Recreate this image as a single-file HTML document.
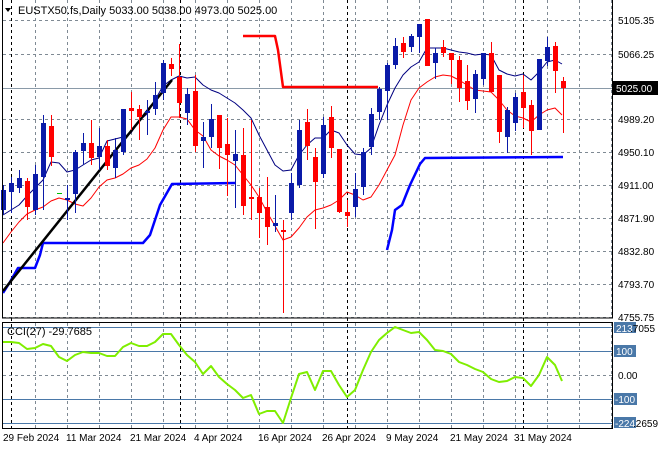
<!DOCTYPE html>
<html><head><meta charset="utf-8"><style>
html,body{margin:0;padding:0;background:#fff;width:660px;height:450px;overflow:hidden}
svg{display:block;font-family:"Liberation Sans",sans-serif;font-size:10px}
</style></head><body>
<svg id="s" width="660" height="450" viewBox="0 0 660 450" xmlns="http://www.w3.org/2000/svg">
<g id="grid" stroke="#7f8a94" stroke-width="1" stroke-dasharray="3,3" fill="none"></g>
<g id="sep" stroke="#000" stroke-width="1" stroke-dasharray="3,3"></g>
<line x1="2" y1="88.5" x2="612" y2="88.5" stroke="#8a9aa8" stroke-width="1"/>
<g id="cci" stroke="#4a78a8" stroke-width="1"></g>
<g id="lines"></g>
<g id="candles"></g>
<rect x="2.5" y="-1" width="610" height="319" fill="none" stroke="#000"/>
<rect x="2.5" y="322.5" width="610" height="106" fill="none" stroke="#000"/>
<polygon points="5,8 11,8 8,12" fill="#000"/>
<text x="18" y="14" font-size="11">EUSTX50.fs,Daily  5033.00 5038.00 4973.00 5025.00</text>
<text x="7" y="335" font-size="11">CCI(27) -29.7685</text>
<g font-size="10" fill="#000">
<text x="618" y="24">5105.35</text>
<text x="618" y="58">5066.25</text>
<text x="618" y="123">4989.20</text>
<text x="618" y="156">4950.10</text>
<text x="618" y="189">4911.00</text>
<text x="618" y="222">4871.90</text>
<text x="618" y="255">4832.80</text>
<text x="618" y="288">4793.70</text>
<text x="618" y="321">4755.75</text>
<rect x="613" y="81" width="45" height="14" fill="#000"/>
<text x="616" y="92" fill="#fff">5025.00</text>
<rect x="614" y="322" width="22" height="11" fill="#4a78a8"/>
<text x="616" y="332" fill="#fff">213</text><text x="630" y="332">.7055</text>
<rect x="614" y="345" width="22" height="12" fill="#4a78a8"/>
<text x="616" y="355" fill="#fff">100</text>
<text x="618" y="379">0.00</text>
<rect x="614" y="393" width="23" height="12" fill="#4a78a8"/>
<text x="615" y="403" fill="#fff">-100</text>
<rect x="614" y="417" width="22" height="11" fill="#4a78a8"/>
<text x="615" y="427" fill="#fff">-224</text><text x="633" y="427">.2659</text>
<text x="3" y="441">29 Feb 2024</text>
<text x="66" y="441">11 Mar 2024</text>
<text x="130" y="441">21 Mar 2024</text>
<text x="194" y="441">4 Apr 2024</text>
<text x="258" y="441">16 Apr 2024</text>
<text x="322" y="441">26 Apr 2024</text>
<text x="386" y="441">9 May 2024</text>
<text x="450" y="441">21 May 2024</text>
<text x="514" y="441">31 May 2024</text>
</g>
</svg>
<script>
var NS="http://www.w3.org/2000/svg";
function el(p,t,a){var e=document.createElementNS(NS,t);for(var k in a)e.setAttribute(k,a[k]);document.getElementById(p).appendChild(e);return e;}
var hy=[20.5,54.5,87.5,119.5,152.5,185.5,218.5,251.5,284.5,317.5];
hy.forEach(function(y){if(y!=87.5)el("grid","line",{x1:3,y1:y,x2:612,y2:y});});
el("grid","line",{x1:3,y1:375.5,x2:612,y2:375.5});
for(var x=35.5;x<612;x+=32){el("grid","line",{x1:x,y1:0,x2:x,y2:317});el("grid","line",{x1:x,y1:323,x2:x,y2:428});}
[11.5,180.5,347.5,523.5].forEach(function(x){el("sep","line",{x1:x,y1:0,x2:x,y2:428});});
[327.5,351.5,399.5,423.5].forEach(function(y){el("cci","line",{x1:3,y1:y,x2:612,y2:y});});
// candles: x, bodyTop, bodyBot, wickTop, wickBot, color(b/r)
var C=[[3,190,210,185,215,'b'],[11,183,192,177,213,'b'],[19,178,188,170,193,'b'],[27,181,207,178,220,'r'],[35,174,210,165,215,'b'],[43,123,177,115,210,'b'],[51,126,157,115,166,'r'],[67,198,200,185,220,'b'],[75,152,194,150,213,'b'],[83,143,151,133,165,'b'],[91,143,158,120,165,'r'],[99,146,157,128,170,'b'],[107,146,166,140,170,'r'],[115,150,168,138,178,'b'],[123,109,152,109,155,'b'],[131,108,111,92,130,'r'],[139,109,117,105,140,'r'],[147,111,113,100,135,'b'],[155,95,109,82,115,'b'],[163,63,93,60,100,'b'],[171,64,69,58,76,'r'],[179,77,103,44,118,'r'],[187,94,113,88,125,'b'],[195,91,146,75,152,'r'],[203,137,141,122,168,'b'],[211,119,137,104,148,'b'],[219,115,148,115,169,'r'],[227,144,155,118,196,'r'],[235,154,161,130,208,'b'],[243,155,206,128,215,'r'],[251,197,199,120,220,'r'],[259,197,213,188,238,'r'],[267,207,227,177,245,'r'],[275,223,226,195,232,'b'],[283,230,232,220,313,'r'],[291,183,213,173,220,'b'],[299,130,185,120,188,'b'],[307,122,146,109,160,'r'],[315,157,182,148,229,'r'],[323,125,174,117,178,'b'],[331,117,148,106,158,'r'],[339,149,212,149,213,'r'],[347,212,216,200,227,'r'],[355,189,207,173,217,'b'],[363,152,187,148,195,'b'],[371,114,147,108,155,'b'],[379,89,112,87,120,'b'],[387,65,91,63,120,'b'],[395,46,65,38,69,'b'],[403,43,52,37,58,'r'],[411,36,47,34,52,'b'],[419,24,37,24,53,'b'],[427,19,66,19,66,'r'],[435,53,63,48,79,'b'],[443,47,53,40,57,'r'],[451,53,60,53,84,'r'],[459,60,88,56,102,'r'],[467,81,101,65,110,'r'],[475,74,99,70,113,'b'],[483,53,79,53,85,'b'],[491,53,92,42,92,'r'],[499,75,132,75,143,'r'],[507,110,137,107,153,'b'],[515,97,123,93,131,'b'],[523,92,108,75,128,'r'],[531,105,131,100,155,'r'],[539,59,130,59,130,'b'],[547,47,61,37,66,'b'],[555,46,71,42,93,'r'],[563,81,88,77,133,'r']];
C.forEach(function(c){var col=c[5]=='b'?'#0a1aa8':'#ff0000';
el("candles","line",{x1:c[0]+.5,y1:c[3],x2:c[0]+.5,y2:c[4],stroke:col,"stroke-width":1});
el("candles","rect",{x:c[0]-2,y:c[1],width:5,height:Math.max(2,c[2]-c[1]),fill:col});});
el("candles","line",{x1:57,y1:193.5,x2:62,y2:193.5,stroke:"#00c000"});
function pl(pts,col,w){el("lines","polyline",{points:pts,fill:"none",stroke:col,"stroke-width":w,"stroke-linejoin":"round"});}
pl("3,215 11,210 19,205 27,196 35,188 43,180 51,162 59,163 67,172 75,170 83,165 91,160 99,158 107,141 115,139 123,137 131,133 139,121 147,114 155,100 163,86 171,80 179,76 187,78 195,77 203,85 211,90 219,93 227,98 235,103 243,110 251,118 259,135 267,150 275,165 283,171 291,170 299,155 307,145 315,138 323,138 331,130 339,133 347,145 355,154 363,155 371,148 379,125 387,105 395,88 403,75 411,67 419,62 427,48 435,48 443,48 451,50 459,52 467,53 475,55 483,54 491,55 499,70 507,74 515,76 523,74 531,80 539,72 547,62 555,60 562,64","#000080",1);
pl("3,243 11,232 19,222 27,214 35,210 43,207 51,201 59,198 67,200 75,204 83,206 91,198 99,187 107,180 115,178 123,174 131,168 139,165 147,159 155,148 163,130 171,117 179,117 187,119 195,130 203,136 211,150 219,156 227,160 235,165 243,175 251,185 259,197 267,212 275,226 283,240 291,237 299,228 307,217 315,210 323,208 331,205 339,200 347,192 355,195 363,200 371,197 379,185 387,170 395,155 403,125 411,100 419,88 427,82 435,77 443,75 451,76 459,80 467,85 475,90 483,91 491,92 499,100 507,110 515,116 523,118 531,122 539,115 547,110 555,108 562,115","#ff0000",1);
pl("243,36 275,36 278,50 283,87 378,87","#ff0000",2.5);
pl("3,293 10,282 18,268 35,268 40,255 43,243 143,243 150,235 160,205 172,184 235,183","#0000ff",2.5);
pl("387,250 392,230 395,210 402,205 410,185 420,164 425,158 563,157","#0000ff",2.5);
pl("3,291 172,80","#000",2.5);
pl("3,342 11,342 19,343 27,349 35,348 43,344 51,346 59,357 67,361 75,355 83,352 91,353 99,353 107,356 115,356 123,347 131,343 139,346 147,346 155,342 163,334 171,334 179,345 187,355 195,362 203,374 211,366 219,377 227,384 235,390 243,398 251,395 259,414 267,411 275,411 283,423 291,398 299,374 307,372 315,390 323,371 331,371 339,385 347,397 355,390 363,370 371,352 379,340 387,333 395,327 403,330 411,333 419,332 427,340 435,350 443,351 451,354 459,362 467,365 475,369 483,372 491,379 499,382 507,381 515,377 523,378 531,386 539,375 547,357 555,365 562,381","#7fee00",2);
</script>
</body></html>
